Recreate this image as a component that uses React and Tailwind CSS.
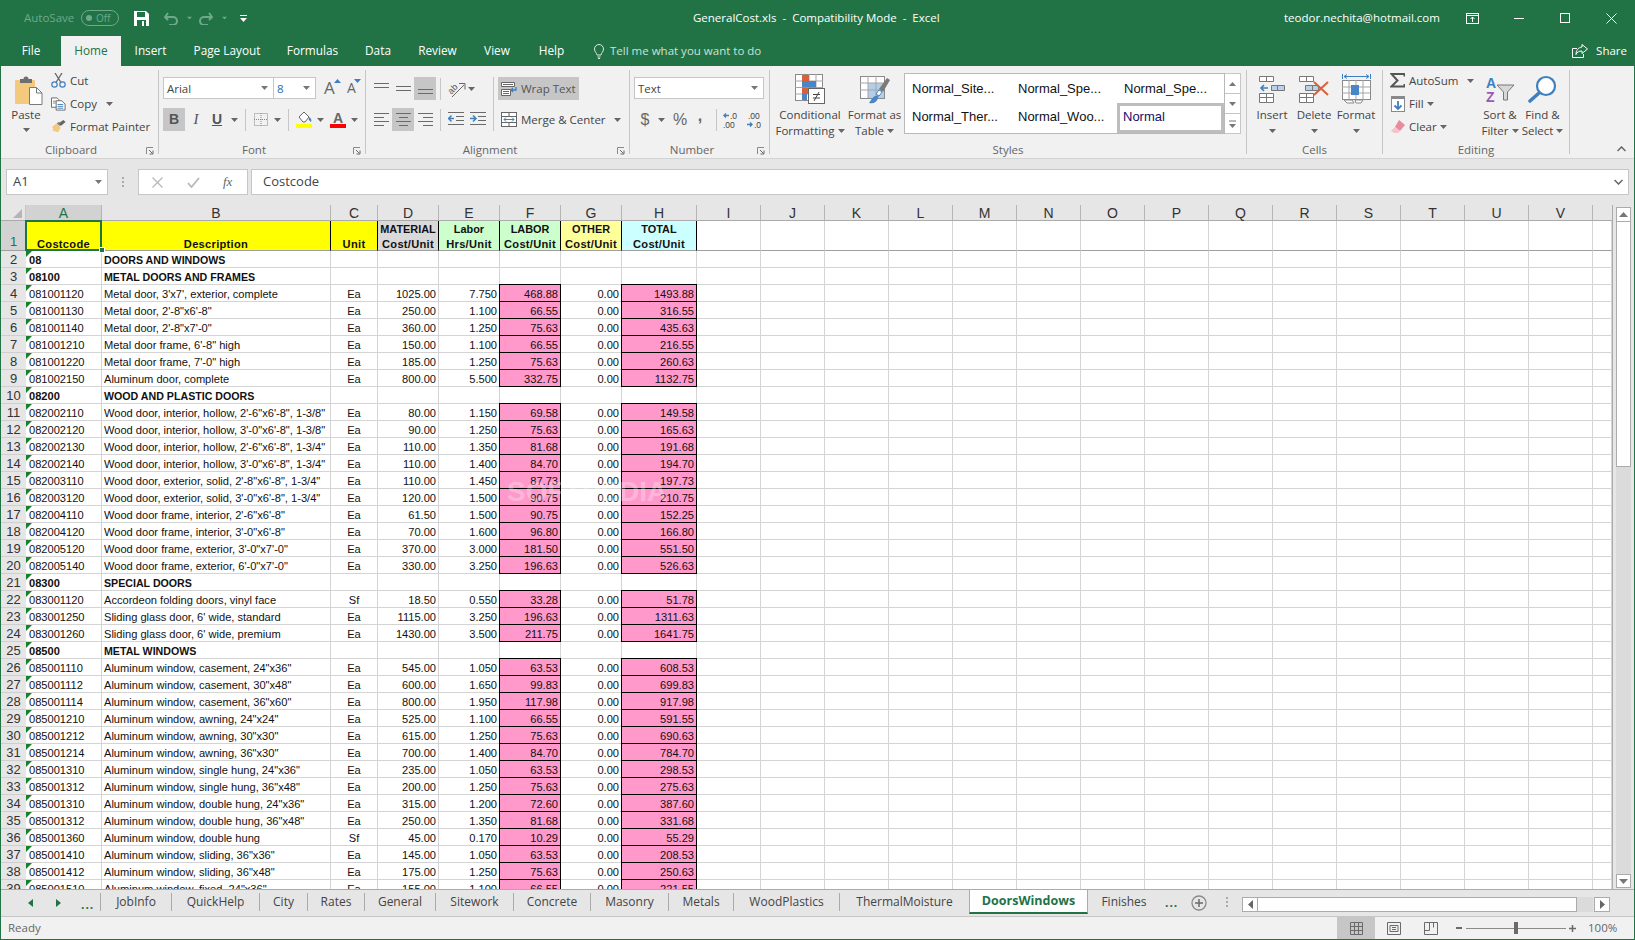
import React from 'react';

const G = '#6a6a6a';
const B = '#3f7fbf';
const F = "#6fa88b";

const Caret = ({ c = '#666', className = '' }) => (
  <svg width="7" height="4" viewBox="0 0 7 4" className={className}><path d="M0 0h7L3.5 4z" fill={c} /></svg>
);

const Lines = ({ ys, ws, x = [] }) => (
  <svg width="15" height="15" viewBox="0 0 15 15">
    {ys.map((y, i) => (
      <rect key={i} x={x[i] ?? 0} y={y} width={ws[i] ?? 15} height="1" fill={G} />
    ))}
  </svg>
);

const Vdiv = ({ className = '' }) => <div className={`w-px bg-[#c6c6c6] ${className}`} />;

const Launcher = ({ className = '' }) => (
  <svg width="8" height="8" viewBox="0 0 8 8" className={`absolute top-[4px] ${className}`}>
    <path d="M.5 7V.5H7" fill="none" stroke="#8a8a8a" />
    <path d="M3 3l3.5 3.5M7 3.5V7H3.5" fill="none" stroke="#6a6a6a" />
  </svg>
);

const GroupLabel = ({ children, launcher, pr = '' }) => (
  <div className={`relative flex h-[15px] justify-center text-[11.5px] leading-[13px] text-[#666] ${pr}`}>
    {children}
    {launcher}
  </div>
);

const Big = ({ w, icon, l1, l2, caret2, caretOnly }) => (
  <div className={`flex ${w} flex-col items-center pt-[8px]`}>
    <div className="flex h-[30px] items-center justify-center">{icon}</div>
    <div className="mt-[3px] h-[16px] whitespace-nowrap leading-[16px]">{l1}</div>
    <div className="flex h-[16px] items-center gap-[3px] whitespace-nowrap leading-[16px]">
      {l2}
      {(caret2 || caretOnly) && <Caret />}
    </div>
  </div>
);

const Paste = () => (
  <svg width="28" height="30" viewBox="0 0 28 30">
    <rect x="0" y="5" width="20" height="24" rx="1" fill="#f2c97d" />
    <path d="M5 8V4h3.5a2.5 2.5 0 0 1 5 0H17v4z" fill="#6e6e6e" />
    <path d="M14.5 12.5h7l5.5 5.5v11.5H14.5z" fill="#fff" stroke="#7a7a7a" />
    <path d="M21.5 12.5V18H27" fill="none" stroke="#7a7a7a" />
  </svg>
);
const Cut = () => (
  <svg width="15" height="15" viewBox="0 0 15 15">
    <path d="M4 0l6 9.5M11 0L5 9.5" stroke="#666" strokeWidth="1.3" fill="none" />
    <circle cx="3.5" cy="11.5" r="2.7" fill="none" stroke={B} strokeWidth="1.2" />
    <circle cx="11.5" cy="11.5" r="2.7" fill="none" stroke={B} strokeWidth="1.2" />
  </svg>
);
const Copy = () => (
  <svg width="16" height="14" viewBox="0 0 16 14">
    <path d="M.5.5h6l2 2v8H.5z" fill="#fff" stroke="#666" />
    <path d="M2 4h4M2 6h3" stroke="#888" />
    <path d="M5.5 3.5h6l3.5 3.5v6.5H5.5z" fill="#fff" stroke="#666" />
    <path d="M7 7.5h6M7 9.5h6M7 11.5h6" stroke={B} />
  </svg>
);
const Painter = () => (
  <svg width="17" height="15" viewBox="0 0 17 15">
    <path d="M1 8l5-4 5 5-3 5-4-1-3-1.5 2-1.5z" fill="#f2c97d" />
    <path d="M6.5 4l2-2 3 3-2 2z" fill="#888" />
    <path d="M9 3.5L14 0l2.5 2.5L11 7z" fill="#666" />
  </svg>
);

const RowBtn = ({ icon, children, caret, cw = 'ml-[4px]' }) => (
  <div className="flex h-[23px] items-center whitespace-nowrap">
    <div className="flex w-[15px] justify-center">{icon}</div>
    <span className={cw}>{children}</span>
    {caret}
  </div>
);

function Clipboard() {
  return (
    <div className="flex w-[157px] flex-col">
      <div className="flex h-[77px]">
        <div className="flex w-[50px] flex-col items-center pt-[9px]">
          <div className="ml-[5px]"><Paste /></div>
          <div className="mt-[2px] h-[16px] leading-[16px]">Paste</div>
          <Caret className="mt-[5px]" />
        </div>
        <div className="pt-[3px]">
          <RowBtn icon={<Cut />}>Cut</RowBtn>
          <RowBtn icon={<Copy />} caret={<Caret className="ml-[9px]" />}>Copy</RowBtn>
          <RowBtn icon={<Painter />}>Format Painter</RowBtn>
        </div>
      </div>
      <GroupLabel pr="pr-[17px]" launcher={<Launcher className="right-[4px]" />}>Clipboard</GroupLabel>
    </div>
  );
}

const Combo = ({ w, label }) => (
  <div className={`flex h-[22px] ${w} items-center justify-between border border-[#c6c6c6] bg-white pl-[3px] pr-[5px] text-[11.5px] leading-[22px] text-[#444]`}>
    <span className="mt-px">{label}</span>
    <Caret c="#777" />
  </div>
);

function Font() {
  return (
    <div className="flex w-[206px] flex-col">
      <div className="h-[77px] pt-[11px]">
        <div className="ml-[4px] flex items-center">
          <Combo w="w-[111px]" label="Arial" />
          <Combo w="w-[43px] -ml-px" label={<span className="text-[#2a6db5]">8</span>} />
          <div className="relative ml-[8px] w-[14px] text-[17px] leading-[20px] text-[#666]">A
            <svg width="7" height="4" viewBox="0 0 7 4" className="absolute -right-[3px] top-[1px]"><path d="M0 4h7L3.5 0z" fill={B} /></svg>
          </div>
          <div className="relative ml-[9px] w-[12px] text-[14px] leading-[20px] text-[#666]">A
            <svg width="7" height="4" viewBox="0 0 7 4" className="absolute -right-[2px] top-[1px]"><path d="M0 0h7L3.5 4z" fill={B} /></svg>
          </div>
        </div>
        <div className="ml-[4px] mt-[9px] flex h-[23px] items-center font-['Liberation_Sans',sans-serif] text-[#555]">
          <div className="flex h-[23px] w-[22px] items-center justify-center bg-[#c6c6c6] text-[14px] font-bold">B</div>
          <div className="w-[22px] text-center font-['Liberation_Serif',serif] text-[15px] italic">I</div>
          <div className="w-[20px] text-center text-[14px] font-bold underline">U</div>
          <Caret className="ml-[4px]" />
          <Vdiv className="ml-[7px] h-[22px]" />
          <svg width="14" height="13" viewBox="0 0 14 13" className="ml-[8px]">
            <rect x=".5" y=".5" width="13" height="12" fill="none" stroke="#888" strokeDasharray="1 1" />
            <path d="M7 0v13M0 6.500h14" stroke="#888" strokeDasharray="1 1" />
          </svg>
          <Caret className="ml-[6px]" />
          <Vdiv className="ml-[7px] h-[22px]" />
          <svg width="16" height="17" viewBox="0 0 16 17" className="ml-[7px]">
            <path d="M3 6l5-5 5 5-4 5-2 0z" fill="#fff" stroke="#666" />
            <path d="M13 6c2 1 3 3 2 5-1-1-3-2-2-5z" fill={B} />
            <rect x="0" y="13" width="16" height="4" fill="#ffff00" />
          </svg>
          <Caret className="ml-[5px]" />
          <div className="relative ml-[6px] flex h-[16px] w-[16px] justify-center">
            <span className="text-[14px] font-bold leading-[13px] text-[#666]">A</span>
            <span className="absolute bottom-0 left-0 h-[4px] w-[16px] bg-[#ff0000]" />
          </div>
          <Caret className="ml-[5px]" />
        </div>
      </div>
      <GroupLabel pr="pr-[16px]" launcher={<Launcher className="right-[4px]" />}>Font</GroupLabel>
    </div>
  );
}

const ABox = ({ on, children }) => (
  <div className={`flex h-[23px] w-[22px] items-center justify-center ${on ? 'bg-[#c6c6c6]' : ''}`}>{children}</div>
);

const Indent = ({ rev }) => (
  <svg width="16" height="15" viewBox="0 0 16 15">
    <path d="M0 .5h16M8 4.5h8M8 8.5h8M0 12.5h16" stroke={G} />
    <path d={rev ? 'M6 6.5H1M3.5 3.5l-3 3 3 3' : 'M0 6.5h5M3 3.5l3 3-3 3'} fill="none" stroke={B} strokeWidth="1.5" />
  </svg>
);

function Alignment() {
  return (
    <div className="flex w-[263px] flex-col">
      <div className="flex h-[77px] pt-[11px]">
        <div className="w-[127px] pl-[4px]">
          <div className="flex h-[23px] items-center">
            <ABox><Lines ys={[2, 6]} ws={[15, 15]} /></ABox>
            <ABox><Lines ys={[5, 9]} ws={[15, 15]} /></ABox>
            <ABox on><Lines ys={[8, 12]} ws={[15, 15]} /></ABox>
            <Vdiv className="ml-[4px] h-[22px]" />
            <svg width="18" height="18" viewBox="0 0 18 18" className="ml-[7px]">
              <text x="0" y="11" fontSize="9" fontFamily="Liberation Sans" fill="#555" transform="rotate(-45 6 9)">ab</text>
              <path d="M4 17L16 5M11 3.5h6v6" fill="none" stroke="#666" />
            </svg>
            <Caret className="ml-[2px]" />
          </div>
          <div className="mt-[8px] flex h-[23px] items-center">
            <ABox><Lines ys={[1, 5, 9, 13]} ws={[15, 10, 15, 10]} /></ABox>
            <ABox on><Lines ys={[1, 5, 9, 13]} ws={[15, 9, 15, 9]} x={[0, 3, 0, 3]} /></ABox>
            <ABox><Lines ys={[1, 5, 9, 13]} ws={[15, 10, 15, 10]} x={[0, 5, 0, 5]} /></ABox>
            <Vdiv className="ml-[4px] h-[22px]" />
            <div className="ml-[7px]"><Indent rev /></div>
            <div className="ml-[6px]"><Indent /></div>
          </div>
        </div>
        <Vdiv className="h-[54px]" />
        <div className="ml-[4px]">
          <div className="flex h-[23px] w-[81px] items-center bg-[#c6c6c6] pl-[3px]">
            <svg width="16" height="15" viewBox="0 0 16 15">
              <path d="M.5 1.5h13v4H.5zM.5 8.5h9v6h-9z" fill="#fff" stroke="#666" />
              <path d="M2 3.5h10M2 10.5h6M2 12.5h6" stroke={G} />
              <path d="M15 6v3h-5M12 7l-2 2 2 2" fill="none" stroke={B} strokeWidth="1.3" />
            </svg>
            <span className="ml-[4px] whitespace-nowrap text-[#555]">Wrap Text</span>
          </div>
          <div className="mt-[8px] flex h-[23px] items-center pl-[3px]">
            <svg width="16" height="15" viewBox="0 0 16 15">
              <rect x=".5" y=".5" width="15" height="14" fill="#fff" stroke="#666" />
              <path d="M0 4.5h16M0 10.5h16M8 0v4.5M8 10.5V15" stroke="#666" />
              <path d="M3 7.5h10M5 5.5l-2 2 2 2M11 5.5l2 2-2 2" fill="none" stroke={B} />
            </svg>
            <span className="ml-[4px] w-[93px] whitespace-nowrap">Merge &amp; Center</span>
            <Caret />
          </div>
        </div>
      </div>
      <GroupLabel pr="pr-[15px]" launcher={<Launcher className="right-[4px]" />}>Alignment</GroupLabel>
    </div>
  );
}

function NumberGroup() {
  return (
    <div className="flex w-[139px] flex-col">
      <div className="h-[77px] pt-[11px]">
        <div className="ml-[4px]"><Combo w="w-[130px]" label="Text" /></div>
        <div className="ml-[4px] mt-[9px] flex h-[23px] items-center font-['Liberation_Sans',sans-serif] text-[#666]">
          <div className="w-[22px] text-center text-[16px]">$</div>
          <Caret className="ml-[2px]" />
          <div className="ml-[5px] w-[20px] text-center text-[16px]">%</div>
          <div className="-mt-[7px] w-[20px] text-center text-[16px] font-bold leading-[14px]">,</div>
          <Vdiv className="ml-[6px] h-[22px]" />
          <svg width="16" height="18" viewBox="0 0 16 18" className="ml-[6px]">
            <path d="M6 4.5H1M3 2.5l-2 2 2 2" fill="none" stroke={B} strokeWidth="1.4" />
            <text x="7" y="8" fontSize="8.5" fontFamily="Liberation Sans" fill="#444">.0</text>
            <text x="0" y="17" fontSize="8.5" fontFamily="Liberation Sans" fill="#444">.00</text>
          </svg>
          <svg width="16" height="18" viewBox="0 0 16 18" className="ml-[8px]">
            <path d="M0 13.5h5M3 11.5l2 2-2 2" fill="none" stroke={B} strokeWidth="1.4" />
            <text x="1" y="8" fontSize="8.5" fontFamily="Liberation Sans" fill="#444">.00</text>
            <text x="7" y="17" fontSize="8.5" fontFamily="Liberation Sans" fill="#444">.0</text>
          </svg>
        </div>
      </div>
      <GroupLabel pr="pr-[15px]" launcher={<Launcher className="right-[4px]" />}>Number</GroupLabel>
    </div>
  );
}

const CondFmt = () => (
  <svg width="30" height="30" viewBox="0 0 30 30">
    <rect x=".5" y=".5" width="27" height="26" fill="#fff" stroke="#8a8a8a" />
    <path d="M7.5 0v27M14 0v27M21 0v27M0 7h28M0 13.5h28M0 20h28" stroke="#a5a5a5" />
    <rect x="7" y="1" width="7" height="6" fill="#d9603b" />
    <rect x="7" y="7" width="14" height="6.5" fill="#4a86c5" />
    <rect x="7" y="14" width="10" height="6" fill="#d9603b" />
    <rect x="7" y="20" width="5" height="6" fill="#4a86c5" />
    <rect x="13.5" y="14.5" width="16" height="15" fill="#fff" stroke="#666" />
    <path d="M18 20.5h7M18 24h7M24 18l-5 9" stroke="#444" fill="none" />
  </svg>
);
const FmtTable = () => (
  <svg width="30" height="30" viewBox="0 0 30 30">
    <rect x=".5" y="2.5" width="24" height="22" fill="#fff" stroke="#8a8a8a" />
    <rect x="8" y="9" width="16" height="15" fill="#b5cde6" />
    <path d="M8 2v22M16 2v22M0 9h24M0 16h24" stroke="#a5a5a5" />
    <path d="M19 15L27 4l3 2-7 12z" fill="#7a7a7a" />
    <path d="M15 22c-2 1-4 4-6 7 5 1 8-1 9-5l1-3z" fill="#4a86c5" />
    <path d="M16 20l3-4 3 2-3 4z" fill="#fff" stroke="#4a86c5" />
  </svg>
);

function Styles() {
  const names = ['Normal_Site...', 'Normal_Spe...', 'Normal_Spe...', 'Normal_Ther...', 'Normal_Woo...'];
  return (
    <div className="flex w-[476px] flex-col">
      <div className="flex h-[77px] pl-[5px]">
        <Big w="w-[70px]" icon={<CondFmt />} l1="Conditional" l2="Formatting" caret2 />
        <Big w="w-[59px]" icon={<FmtTable />} l1="Format as" l2="Table" caret2 />
        <div className="mt-[7px] flex h-[61px]">
          <div className="grid h-[61px] w-[321px] grid-cols-[106px_106px_107px] grid-rows-[29px_30px] border border-[#b9b9b9] bg-white font-['Liberation_Sans',sans-serif] text-[13px] text-[#111]">
            {names.map((n, i) => (
              <div key={i} className={`flex items-center pl-[7px] ${i > 2 ? 'pb-[2px]' : ''}`}>{n}</div>
            ))}
            <div className="flex items-center border-[3px] border-[#bdbdbd] pb-[2px] pl-[3px] text-[#10106a]">Normal</div>
          </div>
          <div className="flex w-[16px] flex-col text-[#666]">
            {[0, 1, 2].map((i) => (
              <div key={i} className="flex h-[21px] -mt-px first:mt-0 items-center justify-center border border-l-0 border-[#c6c6c6] bg-white">
                {i === 0 ? (
                  <svg width="7" height="4" viewBox="0 0 7 4"><path d="M0 4h7L3.5 0z" fill="#777" /></svg>
                ) : i === 1 ? (
                  <Caret c="#777" />
                ) : (
                  <svg width="7" height="8" viewBox="0 0 7 8"><path d="M0 1h7" stroke="#777" /><path d="M0 4h7L3.5 8z" fill="#777" /></svg>
                )}
              </div>
            ))}
          </div>
        </div>
      </div>
      <GroupLabel>Styles</GroupLabel>
    </div>
  );
}

const InsertI = () => (
  <svg width="26" height="27" viewBox="0 0 26 27">
    <path d="M.5.5h7v5h-7zM7.5.5h7v5h-7zM.5 17.5h7v4h-7zM7.5 17.5h7v4h-7zM.5 21.5h7v5h-7zM7.5 21.5h7v5h-7z" fill="#fff" stroke="#777" />
    <path d="M12.5 9.5h6v5h-6zM18.5 9.5h7v5h-7z" fill="#b9d1ea" stroke="#777" />
    <path d="M9 12H2M5 9l-3 3 3 3" fill="none" stroke={B} strokeWidth="1.6" />
  </svg>
);
const DeleteI = () => (
  <svg width="30" height="27" viewBox="0 0 30 27">
    <path d="M.5.5h7v5h-7zM7.5.5h7v5h-7zM.5 17.5h7v4h-7zM7.5 17.5h7v4h-7zM.5 21.5h7v5h-7zM7.5 21.5h7v5h-7z" fill="#fff" stroke="#777" />
    <path d="M6.5 9.5h7v5h-7zM13.5 9.5h6v5h-6z" fill="#b9d1ea" stroke="#777" />
    <path d="M15 6l14 13M29 6L15 19" stroke="#d9603b" strokeWidth="2" fill="none" />
  </svg>
);
const FormatI = () => (
  <svg width="29" height="30" viewBox="0 0 29 30">
    <path d="M.5 0v5M28.5 0v5M2 2.500h25M5 .5l-3 2 3 2M24 .5l3 2-3 2" fill="none" stroke={B} />
    <rect x=".5" y="6.500" width="28" height="19" fill="#fff" stroke="#8a8a8a" />
    <path d="M7 6v20M14 6v20M21 6v20M0 13h28M0 19h28" stroke="#a5a5a5" />
    <rect x="9" y="11" width="8" height="10" fill="#4a86c5" />
    <path d="M2 26h8l2 3H5zM13 26h8l-2 3h-5z" fill="#fff" stroke="#8a8a8a" />
  </svg>
);
const Sigma = () => (
  <svg width="15" height="15" viewBox="0 0 15 15"><path d="M14.500 3.500V1H1.500l6 6.500-6 6h13V11" fill="none" stroke="#555" strokeWidth="2" /></svg>
);
const FillI = () => (
  <svg width="14" height="16" viewBox="0 0 14 16">
    <rect x=".5" y=".5" width="13" height="15" fill="#fff" stroke="#8a8a8a" />
    <rect x="1" y="1" width="12" height="2" fill="#888" />
    <path d="M7 5v8M3.500 9.500L7 13l3.500-3.500" fill="none" stroke={B} strokeWidth="1.800" />
  </svg>
);
const Eraser = () => (
  <svg width="15" height="13" viewBox="0 0 15 13">
    <path d="M9 0l6 5-5 6-5-4z" fill="#ea8a9c" />
    <path d="M5 7l5 4-2 2H4L1 11z" fill="#f5c1ca" />
  </svg>
);
const SortI = () => (
  <svg width="30" height="27" viewBox="0 0 30 27" fontFamily="Liberation Sans" fontWeight="700">
    <text x="1" y="12" fontSize="14" fill="#3f7fbf">A</text>
    <text x="1" y="26" fontSize="14" fill="#9b59b6">Z</text>
    <path d="M12 9h17l-6.500 7v8h-4v-8z" fill="#d8d8d8" stroke="#777" />
  </svg>
);
const FindI = () => (
  <svg width="29" height="28" viewBox="0 0 29 28">
    <circle cx="18" cy="11" r="9" fill="#fff" stroke="#3f7fbf" strokeWidth="2.200" />
    <path d="M11 18L2 26" stroke="#3f7fbf" strokeWidth="3.500" strokeLinecap="round" />
  </svg>
);

function Cells() {
  return (
    <div className="flex w-[135px] flex-col">
      <div className="flex h-[77px] pl-[4px]">
        <Big w="w-[42px]" icon={<InsertI />} l1="Insert" l2="" caretOnly />
        <Big w="w-[42px]" icon={<DeleteI />} l1="Delete" l2="" caretOnly />
        <Big w="w-[42px]" icon={<FormatI />} l1="Format" l2="" caretOnly />
      </div>
      <GroupLabel>Cells</GroupLabel>
    </div>
  );
}

function Editing() {
  return (
    <div className="flex w-[186px] flex-col">
      <div className="flex h-[77px]">
        <div className="w-[95px] pl-[7px] pt-[3px]">
          <RowBtn icon={<Sigma />} caret={<Caret className="ml-[9px]" />}>AutoSum</RowBtn>
          <RowBtn icon={<FillI />} caret={<Caret className="ml-[3px]" />}>Fill</RowBtn>
          <RowBtn icon={<Eraser />} caret={<Caret className="ml-[3px]" />}>Clear</RowBtn>
        </div>
        <Big w="w-[44px]" icon={<SortI />} l1="Sort &" l2="Filter" caret2 />
        <Big w="w-[41px]" icon={<FindI />} l1="Find &" l2="Select" caret2 />
      </div>
      <GroupLabel>Editing</GroupLabel>
    </div>
  );
}

function TitleBar() {
  return (
    <div className="flex h-[36px] items-center text-[11.5px] text-white">
      <div className="flex w-[692px] items-center">
        <span className="ml-[23px] w-[50px] text-[#6fa88b]">AutoSave</span>
        <div className="ml-[7px] flex h-[16px] w-[38px] items-center rounded-full border border-[#6fa88b] pl-[4px] text-[10px] text-[#6fa88b]">
          <span className="h-[6px] w-[6px] rounded-full bg-[#6fa88b]" />
          <span className="ml-[4px]">Off</span>
        </div>
        <svg width="15" height="15" viewBox="0 0 15 15" className="ml-[15px]">
          <path d="M0 0h12l3 3v12H0z" fill="#fff" />
          <rect x="3" y="1" width="8" height="5" fill="#217346" />
          <rect x="3" y="9" width="9" height="6" fill="#217346" />
          <rect x="8" y="10" width="2" height="5" fill="#fff" />
        </svg>
        <svg width="14" height="14" viewBox="0 0 14 14" className="ml-[15px]">
          <path d="M1 6h8a4 4 0 0 1 0 8H5M4 2L1 6l3 3" fill="none" stroke={F} strokeWidth="2" />
        </svg>
        <Caret c={F} className="ml-[8px] scale-75" />
        <svg width="14" height="14" viewBox="0 0 14 14" className="ml-[6px]">
          <path d="M13 6H5a4 4 0 0 0 0 8h4M10 2l3 4-3 3" fill="none" stroke={F} strokeWidth="2" />
        </svg>
        <Caret c={F} className="ml-[8px] scale-75" />
        <svg width="7" height="7" viewBox="0 0 7 7" className="ml-[12px]">
          <path d="M0 .5h7" stroke="#fff" />
          <path d="M0 3h7L3.500 7z" fill="#fff" />
        </svg>
      </div>
      <div className="w-[591px] whitespace-pre">GeneralCost.xls  -  Compatibility Mode  -  Excel</div>
      <div className="flex items-center">
        <div className="w-[182px] whitespace-nowrap">teodor.nechita@hotmail.com</div>
        <svg width="13" height="11" viewBox="0 0 13 11">
          <rect x=".5" y=".5" width="12" height="10" fill="none" stroke="#fff" />
          <path d="M0 2.500h13M6.500 9V4M4.500 6l2-2 2 2" fill="none" stroke="#fff" />
        </svg>
        <svg width="10" height="1" viewBox="0 0 10 1" className="ml-[35px]"><rect width="10" height="1" fill="#fff" /></svg>
        <svg width="10" height="10" viewBox="0 0 10 10" className="ml-[36px]"><rect x=".5" y=".5" width="9" height="9" fill="none" stroke="#fff" /></svg>
        <svg width="11" height="11" viewBox="0 0 11 11" className="ml-[36px]"><path d="M.5.5l10 10M10.500.5l-10 10" stroke="#fff" /></svg>
      </div>
    </div>
  );
}

function TabsRow() {
  const tabs = [
    ['File', 'w-[60px]'], ['Home', 'w-[60px]'], ['Insert', 'w-[59px]'], ['Page Layout', 'w-[94px]'],
    ['Formulas', 'w-[77px]'], ['Data', 'w-[54px]'], ['Review', 'w-[65px]'], ['View', 'w-[54px]'], ['Help', 'w-[55px]'],
  ];
  return (
    <div className="flex h-[30px] items-stretch text-[11.8px] text-white">
      {tabs.map(([t, w]) => (
        <div key={t} className={`flex ${w} items-center justify-center ${t === 'Home' ? 'bg-[#f1f1f1] text-[#217346]' : ''}`}>{t}</div>
      ))}
      <div className="ml-[15px] flex items-center">
        <svg width="10" height="15" viewBox="0 0 10 15">
          <path d="M3 11c0-2-2.500-3-2.500-6a4.500 4.500 0 0 1 9 0c0 3-2.500 4-2.500 6zM3.500 13h3M4 14.500h2" fill="none" stroke="#dbe8e1" />
        </svg>
        <span className="ml-[6px] whitespace-nowrap text-[11.5px] text-[#cfe0d7]">Tell me what you want to do</span>
      </div>
      <div className="ml-auto mr-[7px] flex items-center">
        <svg width="16" height="14" viewBox="0 0 16 14">
          <path d="M5 4.500H.5v9h11V10" fill="none" stroke="#fff" />
          <path d="M10 .5l5.500 4.500-5.500 4.500V7c-3 0-5 1-6 3.500C4 6.500 6 3.500 10 3z" fill="none" stroke="#fff" />
        </svg>
        <span className="ml-[8px] text-[11.5px]">Share</span>
      </div>
    </div>
  );
}

function Ribbon() {
  return (
    <div className="flex h-[93px] border-b border-[#d2d2d2] bg-[#f1f1f1] text-[11.5px] text-[#444]">
      <Clipboard />
      <Vdiv className="mt-[4px] h-[84px]" />
      <Font />
      <Vdiv className="mt-[4px] h-[84px]" />
      <Alignment />
      <Vdiv className="mt-[4px] h-[84px]" />
      <NumberGroup />
      <Vdiv className="mt-[4px] h-[84px]" />
      <Styles />
      <Vdiv className="mt-[4px] h-[84px]" />
      <Cells />
      <Vdiv className="mt-[4px] h-[84px]" />
      <Editing />
      <Vdiv className="mt-[4px] h-[84px]" />
      <div className="flex flex-1 items-end justify-end pb-[6px] pr-[8px]">
        <svg width="9" height="6" viewBox="0 0 9 6"><path d="M.5 5l4-4 4 4" fill="none" stroke="#666" strokeWidth="1.500" /></svg>
      </div>
    </div>
  );
}

function FormulaBar() {
  return (
    <div className="flex h-[46px] items-start bg-[#e6e6e6] pl-[5px] pt-[10px] text-[13px]">
      <div className="flex h-[26px] w-[102px] items-center justify-between border border-[#c6c6c6] bg-white pl-[6px] pr-[5px] text-[#444]">
        <span>A1</span>
        <Caret c="#777" />
      </div>
      <div className="ml-[6px] mr-[6px] flex h-[26px] w-[18px] flex-col items-center justify-center gap-[2px]">
        <span className="h-[2px] w-[2px] bg-[#aaa]" />
        <span className="h-[2px] w-[2px] bg-[#aaa]" />
        <span className="h-[2px] w-[2px] bg-[#aaa]" />
      </div>
      <div className="flex h-[26px] w-[110px] items-center border border-[#c6c6c6] bg-white">
        <svg width="11" height="11" viewBox="0 0 11 11" className="ml-[13px]"><path d="M.5.5l10 10M10.500.5l-10 10" stroke="#b8b8b8" strokeWidth="1.300" /></svg>
        <svg width="13" height="11" viewBox="0 0 13 11" className="ml-[24px]"><path d="M1 6l3.500 4L12 1" fill="none" stroke="#b8b8b8" strokeWidth="1.800" /></svg>
        <span className="ml-[23px] font-['Liberation_Serif',serif] text-[13px] italic text-[#666]">fx</span>
      </div>
      <div className="ml-[3px] flex h-[26px] w-[1378px] items-center justify-between border border-[#c6c6c6] bg-white pl-[11px] pr-[5px] text-[#444]">
        <span>Costcode</span>
        <svg width="9" height="6" viewBox="0 0 9 6"><path d="M.5 1l4 4 4-4" fill="none" stroke="#666" strokeWidth="1.500" /></svg>
      </div>
    </div>
  );
}

const COLS = [
  ['A', 'w-[76px]'], ['B', 'w-[229px]'], ['C', 'w-[47px]'], ['D', 'w-[61px]'], ['E', 'w-[61px]'], ['F', 'w-[61px]'], ['G', 'w-[61px]'], ['H', 'w-[75px]'],
];
const REST = ['I', 'J', 'K', 'L', 'M', 'N', 'O', 'P', 'Q', 'R', 'S', 'T', 'U', 'V'];

const E = 'Ea';
const DATA = [
  ['08', 'DOORS AND WINDOWS'],
  ['08100', 'METAL DOORS AND FRAMES'],
  ['081001120', `Metal door, 3'x7', exterior, complete`, E, '1025.00', '7.750', '468.88', '0.00', '1493.88'],
  ['081001130', `Metal door, 2'-8"x6'-8"`, E, '250.00', '1.100', '66.55', '0.00', '316.55'],
  ['081001140', `Metal door, 2'-8"x7'-0"`, E, '360.00', '1.250', '75.63', '0.00', '435.63'],
  ['081001210', `Metal door frame, 6'-8" high`, E, '150.00', '1.100', '66.55', '0.00', '216.55'],
  ['081001220', `Metal door frame, 7'-0" high`, E, '185.00', '1.250', '75.63', '0.00', '260.63'],
  ['081002150', 'Aluminum door, complete', E, '800.00', '5.500', '332.75', '0.00', '1132.75'],
  ['08200', 'WOOD AND PLASTIC DOORS'],
  ['082002110', `Wood door, interior, hollow, 2'-6"x6'-8", 1-3/8"`, E, '80.00', '1.150', '69.58', '0.00', '149.58'],
  ['082002120', `Wood door, interior, hollow, 3'-0"x6'-8", 1-3/8"`, E, '90.00', '1.250', '75.63', '0.00', '165.63'],
  ['082002130', `Wood door, interior, hollow, 2'-6"x6'-8", 1-3/4"`, E, '110.00', '1.350', '81.68', '0.00', '191.68'],
  ['082002140', `Wood door, interior, hollow, 3'-0"x6'-8", 1-3/4"`, E, '110.00', '1.400', '84.70', '0.00', '194.70'],
  ['082003110', `Wood door, exterior, solid, 2'-8"x6'-8", 1-3/4"`, E, '110.00', '1.450', '87.73', '0.00', '197.73'],
  ['082003120', `Wood door, exterior, solid, 3'-0"x6'-8", 1-3/4"`, E, '120.00', '1.500', '90.75', '0.00', '210.75'],
  ['082004110', `Wood door frame, interior, 2'-6"x6'-8"`, E, '61.50', '1.500', '90.75', '0.00', '152.25'],
  ['082004120', `Wood door frame, interior, 3'-0"x6'-8"`, E, '70.00', '1.600', '96.80', '0.00', '166.80'],
  ['082005120', `Wood door frame, exterior, 3'-0"x7'-0"`, E, '370.00', '3.000', '181.50', '0.00', '551.50'],
  ['082005140', `Wood door frame, exterior, 6'-0"x7'-0"`, E, '330.00', '3.250', '196.63', '0.00', '526.63'],
  ['08300', 'SPECIAL DOORS'],
  ['083001120', 'Accordeon folding doors, vinyl face', 'Sf', '18.50', '0.550', '33.28', '0.00', '51.78'],
  ['083001250', `Sliding glass door, 6' wide, standard`, E, '1115.00', '3.250', '196.63', '0.00', '1311.63'],
  ['083001260', `Sliding glass door, 6' wide, premium`, E, '1430.00', '3.500', '211.75', '0.00', '1641.75'],
  ['08500', 'METAL WINDOWS'],
  ['085001110', 'Aluminum window, casement, 24"x36"', E, '545.00', '1.050', '63.53', '0.00', '608.53'],
  ['085001112', 'Aluminum window, casement, 30"x48"', E, '600.00', '1.650', '99.83', '0.00', '699.83'],
  ['085001114', 'Aluminum window, casement, 36"x60"', E, '800.00', '1.950', '117.98', '0.00', '917.98'],
  ['085001210', 'Aluminum window, awning, 24"x24"', E, '525.00', '1.100', '66.55', '0.00', '591.55'],
  ['085001212', 'Aluminum window, awning, 30"x30"', E, '615.00', '1.250', '75.63', '0.00', '690.63'],
  ['085001214', 'Aluminum window, awning, 36"x30"', E, '700.00', '1.400', '84.70', '0.00', '784.70'],
  ['085001310', 'Aluminum window, single hung, 24"x36"', E, '235.00', '1.050', '63.53', '0.00', '298.53'],
  ['085001312', 'Aluminum window, single hung, 36"x48"', E, '200.00', '1.250', '75.63', '0.00', '275.63'],
  ['085001310', 'Aluminum window, double hung, 24"x36"', E, '315.00', '1.200', '72.60', '0.00', '387.60'],
  ['085001312', 'Aluminum window, double hung, 36"x48"', E, '250.00', '1.350', '81.68', '0.00', '331.68'],
  ['085001360', 'Aluminum window, double hung', 'Sf', '45.00', '0.170', '10.29', '0.00', '55.29'],
  ['085001410', 'Aluminum window, sliding, 36"x36"', E, '145.00', '1.050', '63.53', '0.00', '208.53'],
  ['085001412', 'Aluminum window, sliding, 36"x48"', E, '175.00', '1.250', '75.63', '0.00', '250.63'],
  ['085001510', 'Aluminum window, fixed, 24"x36"', E, '155.00', '1.100', '66.55', '0.00', '221.55'],
];

const Empty = ({ w }) => <div className={`h-[17px] ${w} shrink-0 border-b border-r border-[#d4d4d4]`} />;
const EmptyRest = () => (
  <>
    {REST.map((c) => <Empty key={c} w="w-[64px]" />)}
    <Empty w="w-[19px]" />
  </>
);

const cellBase = 'flex shrink-0 items-end whitespace-nowrap overflow-hidden leading-[13px]';
const grid = 'h-[17px] border-b border-r border-[#d4d4d4]';

function DataRow({ n, r }) {
  const [a, b, c, d, e, f, g, h] = r;
  const bold = r.length === 2;
  const pink = (w, v) => (
    <div className={`${cellBase} relative -ml-px -mt-px h-[18px] ${w} justify-end border border-black bg-[#ff99cc] pr-[2px]`}>{v}</div>
  );
  const num = (w, v) => <div className={`${cellBase} ${grid} ${w} justify-end pr-[2px]`}>{v}</div>;
  return (
    <div className="flex h-[17px]">
      <div className="flex h-[17px] w-[25px] shrink-0 items-center justify-center border-b border-[#cfcfcf] bg-[#e6e6e6] font-['Liberation_Sans',sans-serif] text-[13px] leading-[17px] text-[#333]">{n}</div>
      <div className={`${cellBase} ${grid} relative w-[76px] pl-[3px] ${bold ? 'font-bold' : ''}`}>
        <span className="absolute left-0 top-0 h-0 w-0 border-r-[6px] border-t-[6px] border-r-transparent border-t-[#16802c]" />
        {a}
      </div>
      <div className={`${cellBase} ${grid} w-[229px] pl-[2px] ${bold ? 'text-[10.65px] font-bold' : ''}`}>{b}</div>
      <div className={`${cellBase} ${grid} w-[47px] justify-center`}>{c}</div>
      {bold ? (
        <>
          <Empty w="w-[61px]" /><Empty w="w-[61px]" /><Empty w="w-[61px]" /><Empty w="w-[61px]" /><Empty w="w-[75px]" />
        </>
      ) : (
        <>
          {num('w-[61px]', d)}
          {num('w-[61px]', e)}
          {pink('w-[62px]', f)}
          {num('w-[61px]', g)}
          {pink('w-[76px]', h)}
        </>
      )}
      <EmptyRest />
    </div>
  );
}

function Head({ w, bg, t1, t2, right = 'border-r-black' }) {
  return (
    <div className={`flex h-[30px] ${w} shrink-0 flex-col items-center justify-end border-b border-r border-b-[#9f9f9f] ${right} ${bg} text-center font-bold leading-[15px]`}>
      {t1 && <div className="translate-y-[2px] text-[10.9px]">{t1}</div>}
      <div className="translate-y-[2px] tracking-[0.3px]">{t2}</div>
    </div>
  );
}

function Sheet() {
  return (
    <div className="relative h-[684px] w-[1612px] shrink-0 overflow-hidden border-r border-[#ababab] bg-white font-['Liberation_Sans',sans-serif] text-[11.1px] text-[#111]">
      <div className="flex h-[16px] border-b border-[#ababab] bg-[#e6e6e6] text-[14px] leading-[16px] text-[#333]">
        <div className="relative w-[25px] shrink-0 border-r border-[#c6c6c6]">
          <span className="absolute bottom-[2px] right-[3px] h-0 w-0 border-b-[9px] border-l-[9px] border-b-[#b5b5b5] border-l-transparent" />
        </div>
        {COLS.map(([c, w]) => (
          <div key={c} className={`${w} shrink-0 border-r border-[#b5b5b5] text-center ${c === 'A' ? 'bg-[#d2d2d2] text-[#217346]' : ''}`}>{c}</div>
        ))}
        {REST.map((c) => (
          <div key={c} className="w-[64px] shrink-0 border-r border-[#b5b5b5] text-center">{c}</div>
        ))}
      </div>
      <div className="flex h-[30px]">
        <div className="flex h-[30px] w-[25px] shrink-0 items-end justify-center border-b border-[#9f9f9f] bg-[#d2d2d2] text-[13px] leading-[17px] text-[#217346]">1</div>
        <div className="relative w-[76px] shrink-0">
          <Head w="w-[76px]" bg="bg-[#ffff00]" t2="Costcode" right="border-r-[#ffff00]" />
          <span className="absolute -left-px -top-px bottom-[0px] right-0 border-2 border-[#217346]" />
          <span className="absolute bottom-[-2px] right-[-3px] z-10 h-[6px] w-[6px] border border-white bg-[#217346]" />
        </div>
        <Head w="w-[229px]" bg="bg-[#ffff00]" t2="Description" />
        <Head w="w-[47px]" bg="bg-[#ffff00]" t2="Unit" />
        <Head w="w-[61px]" bg="bg-[#d9d9d9]" t1="MATERIAL" t2="Cost/Unit" />
        <Head w="w-[61px]" bg="bg-[#ccffcc]" t1="Labor" t2="Hrs/Unit" />
        <Head w="w-[61px]" bg="bg-[#ccffcc]" t1="LABOR" t2="Cost/Unit" />
        <Head w="w-[61px]" bg="bg-[#ffff99]" t1="OTHER" t2="Cost/Unit" />
        <Head w="w-[75px]" bg="bg-[#ccffff]" t1="TOTAL" t2="Cost/Unit" />
        {REST.map((c) => (
          <div key={c} className="h-[30px] w-[64px] shrink-0 border-b border-r border-b-[#9f9f9f] border-r-[#d4d4d4]" />
        ))}
        <div className="h-[30px] w-[19px] shrink-0 border-b border-r border-b-[#9f9f9f] border-r-[#d4d4d4]" />
      </div>
      {DATA.map((r, i) => <DataRow key={i} n={i + 2} r={r} />)}
      <div className="pointer-events-none absolute left-[506px] top-[272px] whitespace-nowrap text-[28px] font-bold leading-[30px] text-white/30">SOFTPEDIA</div>
    </div>
  );
}

const UpArrow = ({ c = '#777' }) => (<svg width="9" height="5" viewBox="0 0 9 5"><path d="M0 5h9L4.500 0z" fill={c} /></svg>);
const DownArrow = ({ c = '#777' }) => (<svg width="9" height="5" viewBox="0 0 9 5"><path d="M0 0h9L4.500 5z" fill={c} /></svg>);

function VScroll() {
  return (
    <div className="flex h-[684px] flex-1 flex-col bg-[#e6e6e6] pl-[3px] pr-[3px] pt-[2px]">
      <div className="flex h-[15px] w-[15px] items-center justify-center border border-[#ababab] bg-white"><UpArrow /></div>
      <div className="h-[246px] w-[15px] -mt-px border border-[#ababab] bg-white" />
      <div className="w-[15px] flex-1 bg-[#dbdbdb]" />
      <div className="mb-[1px] flex h-[14px] w-[15px] items-center justify-center border border-[#ababab] bg-white"><DownArrow /></div>
    </div>
  );
}

function SheetTabs() {
  const tabs = [
    ['JobInfo', 'w-[71px]'], ['QuickHelp', 'w-[88px]'], ['City', 'w-[48px]'], ['Rates', 'w-[57px]'], ['General', 'w-[71px]'], ['Sitework', 'w-[78px]'],
    ['Concrete', 'w-[77px]'], ['Masonry', 'w-[78px]'], ['Metals', 'w-[65px]'], ['WoodPlastics', 'w-[106px]'], ['ThermalMoisture', 'w-[130px]'],
  ];
  return (
    <div className="flex h-[28px] border-b border-t border-b-[#c6c6c6] border-t-[#ababab] bg-[#e6e6e6] text-[12px] text-[#444]">
      <div className="flex h-[26px] w-[100px] items-center">
        <svg width="5" height="8" viewBox="0 0 5 8" className="ml-[27px]"><path d="M5 0v8L0 4z" fill="#217346" /></svg>
        <svg width="5" height="8" viewBox="0 0 5 8" className="ml-[23px]"><path d="M0 0v8l5-4z" fill="#217346" /></svg>
        <span className="ml-[20px] mt-[3px] font-bold leading-none tracking-[1px] text-[#217346]">...</span>
      </div>
      <div className="mt-[3px] h-[18px] w-px bg-[#ababab] -ml-px" />
      {tabs.map(([t, w]) => (
        <div key={t} className={`mt-[3px] flex h-[18px] ${w} items-center justify-center border-r border-[#ababab]`}>{t}</div>
      ))}
      <div className="-ml-px -mt-px flex h-[25px] w-[119px] items-center justify-center border-x border-t border-b-2 border-[#ababab] border-b-[#217346] bg-white pt-[1px] text-[12.5px] font-bold text-[#217346]">DoorsWindows</div>
      <div className="flex h-[24px] w-[72px] items-center justify-center">Finishes</div>
      <span className="ml-[5px] mt-[7px] font-bold leading-none tracking-[1px] text-[#217346]">...</span>
      <svg width="16" height="16" viewBox="0 0 16 16" className="ml-[13px] mt-[5px]">
        <circle cx="8" cy="8" r="7" fill="none" stroke="#8a8a8a" strokeWidth="1.300" />
        <path d="M8 4v8M4 8h8" stroke="#6a6a6a" strokeWidth="1.500" />
      </svg>
      <div className="ml-[19px] mt-[7px] flex h-[12px] flex-col gap-[2px]">
        <span className="h-[2px] w-[2px] bg-[#aaa]" />
        <span className="h-[2px] w-[2px] bg-[#aaa]" />
        <span className="h-[2px] w-[2px] bg-[#aaa]" />
      </div>
      <div className="ml-[14px] mt-[7px] flex h-[15px] w-[368px]">
        <div className="flex h-[15px] w-[16px] items-center justify-center border border-[#ababab] bg-white">
          <svg width="5" height="9" viewBox="0 0 5 9"><path d="M5 0v9L0 4.500z" fill="#666" /></svg>
        </div>
        <div className="-ml-px h-[15px] w-[320px] border border-[#ababab] bg-white" />
        <div className="h-[15px] flex-1 bg-[#dbdbdb]" />
        <div className="ml-[1px] flex h-[15px] w-[16px] items-center justify-center border border-[#ababab] bg-white">
          <svg width="5" height="9" viewBox="0 0 5 9"><path d="M0 0v9l5-4.500z" fill="#666" /></svg>
        </div>
      </div>
    </div>
  );
}

function StatusBar() {
  return (
    <div className="flex h-[22px] items-center bg-[#f1f1f1] pl-[7px] text-[11.5px] text-[#666]">
      <span>Ready</span>
      <div className="ml-auto flex h-[22px] items-center">
        <div className="flex h-[22px] w-[38px] items-center justify-center bg-[#c6c6c6]">
          <svg width="13" height="13" viewBox="0 0 13 13"><path d="M.5.500h12v12H.5zM4.500 0v13M8.500 0v13M0 4.500h13M0 8.500h13" fill="none" stroke="#6a6a6a" /></svg>
        </div>
        <svg width="14" height="13" viewBox="0 0 14 13" className="ml-[12px]"><path d="M.5.500h13v12H.5z" fill="none" stroke="#6a6a6a" /><path d="M3 3.500h8v6H3zM5 5.500h4M5 7.500h4" fill="none" stroke="#6a6a6a" /></svg>
        <svg width="14" height="13" viewBox="0 0 14 13" className="ml-[23px]"><path d="M.5 12.500V.5h13v12zM.5 8.500h5V.5M9.500.5v5" fill="none" stroke="#6a6a6a" /></svg>
        <span className="ml-[18px] h-[2px] w-[6px] bg-[#6a6a6a]" />
        <div className="relative ml-[4px] flex h-[12px] w-[100px] items-center">
          <span className="h-px w-full bg-[#8a8a8a]" />
          <span className="absolute left-[48px] top-0 h-[12px] w-[4px] bg-[#6a6a6a]" />
        </div>
        <svg width="7" height="7" viewBox="0 0 7 7" className="ml-[3px]"><path d="M3.500 0v7M0 3.500h7" stroke="#6a6a6a" strokeWidth="1.500" /></svg>
        <span className="ml-[12px] w-[46px] text-[#666]">100%</span>
      </div>
    </div>
  );
}

export default function App() {
  return (
    <div className="flex h-[940px] w-[1635px] flex-col overflow-hidden border-x border-b border-[#217346] bg-[#217346] font-['Open_Sans',sans-serif]">
      <TitleBar />
      <TabsRow />
      <Ribbon />
      <FormulaBar />
      <div className="flex h-[684px] bg-[#e6e6e6]">
        <Sheet />
        <VScroll />
      </div>
      <SheetTabs />
      <StatusBar />
    </div>
  );
}
